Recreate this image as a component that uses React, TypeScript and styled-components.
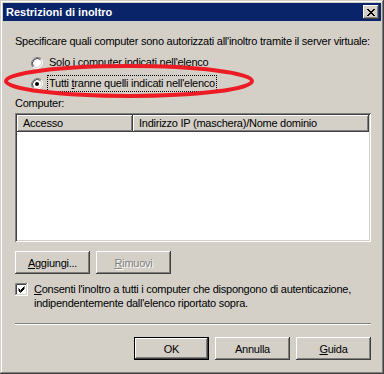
import styled, { createGlobalStyle } from "styled-components";

const GlobalStyle = createGlobalStyle`
  html, body {
    margin: 0;
    padding: 0;
    background: #d4d0c8;
  }
  body {
    font-family: Tahoma, "Liberation Sans", Arial, sans-serif;
    font-size: 11px;
    letter-spacing: -0.25px;
    color: #000;
  }
`;

// Classic 3D bevels
const raised = `
  box-shadow:
    inset -1px -1px #404040,
    inset 1px 1px #ffffff,
    inset -2px -2px #808080,
    inset 2px 2px #d4d0c8;
`;

const Window = styled.div`
  position: relative;
  width: 384px;
  height: 374px;
  box-sizing: border-box;
  padding: 3px;
  background: #d4d0c8;
  box-shadow:
    inset -1px -1px #404040,
    inset 1px 1px #d4d0c8,
    inset -2px -2px #808080,
    inset 2px 2px #ffffff;
  display: flex;
  flex-direction: column;
`;

const TitleBar = styled.div`
  height: 18px;
  background: #0a246a;
  display: flex;
  align-items: center;
  justify-content: space-between;
  padding: 0 2px 0 2px;
`;

const TitleText = styled.span`
  color: #fff;
  font-weight: bold;
  font-size: 11px;
  letter-spacing: 0;
  line-height: 13px;
  padding-left: 1px;
`;

const CloseButton = styled.div`
  width: 16px;
  height: 14px;
  background: #d4d0c8;
  ${raised}
  display: flex;
  align-items: center;
  justify-content: center;
`;

const Body = styled.div`
  display: flex;
  flex-direction: column;
  padding: 0 10px 0 12px;
`;

const Text = styled.div<{ $top: number }>`
  margin-top: ${(p) => p.$top}px;
  line-height: 13px;
  white-space: nowrap;
`;

const RadioGroup = styled.div`
  display: flex;
  flex-direction: column;
  gap: 8px;
  margin-top: 8px;
  padding-left: 16px;
`;

const OptionRow = styled.label`
  display: flex;
  align-items: center;
  gap: 4px;
  height: 13px;
`;

const OptionLabel = styled.span<{ $focused?: boolean }>`
  line-height: 13px;
  padding: 1px 1px;
  border: 1px dotted ${(p) => (p.$focused ? "#000" : "transparent")};
  white-space: nowrap;
`;

const U = styled.span`
  text-decoration: underline;
`;

const ListView = styled.div`
  margin-top: 3px;
  height: 129px;
  background: #fff;
  box-sizing: border-box;
  padding: 2px;
  box-shadow:
    inset 1px 1px #808080,
    inset -1px -1px #ffffff,
    inset 2px 2px #404040,
    inset -2px -2px #d4d0c8;
`;

const HeaderRow = styled.div`
  display: flex;
  height: 17px;
`;

const HeaderCell = styled.div<{ $width?: number }>`
  ${(p) => (p.$width ? `width: ${p.$width}px;` : "flex: 1;")}
  box-sizing: border-box;
  background: #d4d0c8;
  ${raised}
  padding: 0 6px;
  line-height: 17px;
  white-space: nowrap;
  overflow: hidden;
`;

const ButtonRow = styled.div<{ $top: number; $end?: boolean }>`
  display: flex;
  gap: 6px;
  margin-top: ${(p) => p.$top}px;
  justify-content: ${(p) => (p.$end ? "flex-end" : "flex-start")};
`;

const Button = styled.div<{ $default?: boolean; $disabled?: boolean }>`
  width: 75px;
  height: 23px;
  box-sizing: border-box;
  display: flex;
  align-items: center;
  justify-content: center;
  background: #d4d0c8;
  color: ${(p) => (p.$disabled ? "#808080" : "#000")};
  text-shadow: ${(p) => (p.$disabled ? "1px 1px #fff" : "none")};
  border: ${(p) => (p.$default ? "1px solid #000" : "none")};
  ${raised}
`;

const CheckRow = styled.div`
  display: flex;
  align-items: flex-start;
  gap: 6px;
  margin-top: 8px;
`;

const CheckText = styled.div`
  line-height: 14px;
`;

const Separator = styled.div`
  margin-top: 13px;
  height: 2px;
  border-top: 1px solid #808080;
  border-bottom: 1px solid #ffffff;
  box-sizing: border-box;
`;

const Annotation = styled.svg`
  position: absolute;
  left: 2px;
  top: 62px;
  pointer-events: none;
`;

function Radio({ checked }: { checked?: boolean }) {
  return (
    <svg width="12" height="12" viewBox="0 0 12 12">
      <circle cx="6" cy="6" r="5" fill="#fff" />
      <path d="M10.2 1.8 A6 6 0 0 0 1.8 10.2" stroke="#808080" strokeWidth="1" fill="none" />
      <path d="M1.8 10.2 A6 6 0 0 0 10.2 1.8" stroke="#fff" strokeWidth="1" fill="none" />
      <path d="M9.5 2.5 A5 5 0 0 0 2.5 9.5" stroke="#404040" strokeWidth="1" fill="none" />
      <path d="M2.5 9.5 A5 5 0 0 0 9.5 2.5" stroke="#d4d0c8" strokeWidth="1" fill="none" />
      {checked && <circle cx="6" cy="6" r="2" fill="#000" />}
    </svg>
  );
}

function CheckBox() {
  return (
    <svg width="13" height="13" viewBox="0 0 13 13" style={{ flex: "none", marginTop: 1 }}>
      <rect x="0" y="0" width="13" height="13" fill="#fff" />
      <path d="M0.5 12 V0.5 H12" stroke="#808080" fill="none" />
      <path d="M1.5 11 V1.5 H11" stroke="#404040" fill="none" />
      <path d="M0 12.5 H12.5 V0" stroke="#fff" fill="none" />
      <path d="M1 11.5 H11.5 V1" stroke="#d4d0c8" fill="none" />
      <path d="M3.5 5.5 L5.5 7.5 L9.5 3.5 M3.5 6.5 L5.5 8.5 L9.5 4.5 M3.5 7.5 L5.5 9.5 L9.5 5.5" stroke="#000" fill="none" />
    </svg>
  );
}

export default function App() {
  return (
    <>
      <GlobalStyle />
      <Window>
        <TitleBar>
          <TitleText>Restrizioni di inoltro</TitleText>
          <CloseButton>
            <svg width="8" height="7" viewBox="0 0 8 7">
              <path d="M0 0 L7 7 M1 0 L8 7 M7 0 L0 7 M8 0 L1 7" stroke="#000" strokeWidth="1" />
            </svg>
          </CloseButton>
        </TitleBar>
        <Body>
          <Text $top={14}>
            Specificare quali computer sono autorizzati all'inoltro tramite il server virtuale:
          </Text>
          <RadioGroup>
            <OptionRow>
              <Radio />
              <OptionLabel>Solo i computer indicati nell'elenco</OptionLabel>
            </OptionRow>
            <OptionRow>
              <Radio checked />
              <OptionLabel $focused>
                Tutti <U>t</U>ranne quelli indicati nell'elenco
              </OptionLabel>
            </OptionRow>
          </RadioGroup>
          <Text $top={7}>Computer:</Text>
          <ListView>
            <HeaderRow>
              <HeaderCell $width={116}>Accesso</HeaderCell>
              <HeaderCell>Indirizzo IP (maschera)/Nome dominio</HeaderCell>
            </HeaderRow>
          </ListView>
          <ButtonRow $top={9}>
            <Button>
              <span>
                <U>A</U>ggiungi...
              </span>
            </Button>
            <Button $disabled>
              <span>
                <U>R</U>imuovi
              </span>
            </Button>
          </ButtonRow>
          <CheckRow>
            <CheckBox />
            <CheckText>
              <U>C</U>onsenti l'inoltro a tutti i computer che dispongono di autenticazione,
              <br />
              indipendentemente dall'elenco riportato sopra.
            </CheckText>
          </CheckRow>
          <Separator />
          <ButtonRow $top={12} $end>
            <Button $default>OK</Button>
            <Button>Annulla</Button>
            <Button>
              <span>
                <U>G</U>uida
              </span>
            </Button>
          </ButtonRow>
        </Body>
        <Annotation width="256" height="40" viewBox="0 0 256 40">
          <ellipse cx="127" cy="19" rx="123" ry="15" fill="none" stroke="#ed1c24" strokeWidth="4" />
        </Annotation>
      </Window>
    </>
  );
}
